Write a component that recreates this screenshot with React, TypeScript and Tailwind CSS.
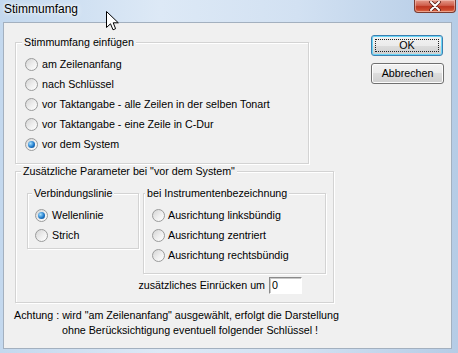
import type { ReactNode } from "react";

function Radio({ label, checked = false, gap = "gap-[4px]" }: { label: string; checked?: boolean; gap?: string }) {
  return (
    <div className={`flex h-5 items-center ${gap}`}>
      <span className="flex h-[13px] w-[13px] shrink-0 items-center justify-center rounded-full border border-[#9a9b9b] bg-[linear-gradient(135deg,#d4d4d4,#efefef_55%,#ffffff)]">
        {checked && (
          <span className="h-[7px] w-[7px] rounded-full bg-[radial-gradient(circle_at_35%_35%,#a8e2ff,#1f7acb_55%,#0a3d78)]" />
        )}
      </span>
      <span className="whitespace-nowrap">{label}</span>
    </div>
  );
}

function GroupBox({
  title,
  titleLeft,
  className,
  children,
}: {
  title: string;
  titleLeft: string;
  className: string;
  children: ReactNode;
}) {
  return (
    <div className={`relative border border-[#d3d3d3] shadow-[inset_1px_1px_0_#ffffff,1px_1px_0_#ffffff] ${className}`}>
      <span className={`absolute -top-[7px] ${titleLeft} whitespace-nowrap bg-[#f0f0f0] px-[2px] leading-[13px]`}>
        {title}
      </span>
      {children}
    </div>
  );
}

function Cursor() {
  return (
    <svg className="absolute left-[106px] top-[11px]" width="13" height="20" viewBox="0 0 13 20">
      <path
        d="M0.5 0.5 L0.5 16.5 L4.5 12.8 L7 18.8 L9.6 17.7 L7.2 11.8 L12.3 11.8 Z"
        fill="#ffffff"
        stroke="#000000"
        strokeWidth="1"
        strokeLinejoin="round"
      />
    </svg>
  );
}

export default function App() {
  return (
    <div className="relative h-[353px] w-[458px] overflow-hidden bg-[linear-gradient(90deg,#c3d8ee,#dde9f6_35%,#d2e1f2_65%,#b5cce6)] font-['Liberation_Sans',Arial,sans-serif] text-[10.7px] text-black">
      {/* Title bar */}
      <div className="flex h-[22px] items-start justify-between">
        <span className="pl-[4px] pt-[2px] text-[12px] leading-[14px] text-black [text-shadow:0_0_6px_#ffffff,0_0_3px_#ffffff]">
          Stimmumfang
        </span>
        <div className="mr-[2px] flex h-[13px] w-[42px] items-center justify-center rounded-b-[4px] border border-t-0 border-[#7a3a30] bg-[linear-gradient(180deg,#e39a8a,#d0604c_45%,#bd3620_55%,#cf4e30_85%,#e68560)] shadow-[inset_0_0_0_1px_rgba(255,220,210,0.45)]">
          <svg width="12" height="10" viewBox="0 0 12 10">
            <path d="M2 1 L10 9 M10 1 L2 9" stroke="#5a2018" strokeWidth="3.6" strokeLinecap="round" />
            <path d="M2 1 L10 9 M10 1 L2 9" stroke="#ffffff" strokeWidth="2" strokeLinecap="round" />
          </svg>
        </div>
      </div>

      {/* Client area */}
      <div className="ml-[3px] flex h-[327px] w-[449px] flex-col border border-[#a3b0bf] bg-[#f0f0f0] pl-[11px] pt-[12px]">
        <div className="flex items-start">
          {/* Left column */}
          <div className="mt-[7px] flex w-[319px] flex-col">
            <GroupBox title="Stimmumfang einfügen" titleLeft="left-[6px]" className="h-[122px] w-[294px] pl-[9px] pt-[11px]">
              <Radio label="am Zeilenanfang" />
              <Radio label="nach Schlüssel" />
              <Radio label="vor Taktangabe - alle Zeilen in der selben Tonart" />
              <Radio label="vor Taktangabe - eine Zeile in C-Dur" />
              <Radio label="vor dem System" checked />
            </GroupBox>

            <GroupBox
              title={'Zusätzliche Parameter bei "vor dem System"'}
              titleLeft="left-[5px]"
              className="mt-[7px] h-[132px] w-[319px] pl-[11px] pt-[21px]"
            >
              <div className="flex items-start gap-[4px]">
                <GroupBox title="Verbindungslinie" titleLeft="left-[4px]" className="h-[56px] w-[112px] pl-[7px] pt-[11px]">
                  <Radio label="Wellenlinie" checked />
                  <Radio label="Strich" />
                </GroupBox>
                <GroupBox
                  title="bei Instrumentenbezeichnung"
                  titleLeft="left-[1px]"
                  className="h-[81px] w-[183px] pl-[8px] pt-[11px]"
                >
                  <Radio label="Ausrichtung linksbündig" gap="gap-[3px]" />
                  <Radio label="Ausrichtung zentriert" gap="gap-[3px]" />
                  <Radio label="Ausrichtung rechtsbündig" gap="gap-[3px]" />
                </GroupBox>
              </div>
              <div className="mt-[3px] flex items-center justify-end gap-[4px] pr-[31px]">
                <span className="whitespace-nowrap">zusätzliches Einrücken um</span>
                <div className="flex h-[17px] w-[33px] items-center border border-b-white border-l-[#8a8a8a] border-r-white border-t-[#8a8a8a] bg-white pl-[2px] shadow-[inset_1px_1px_0_#c8c8c8]">
                  0
                </div>
              </div>
            </GroupBox>
          </div>

          {/* Buttons */}
          <div className="ml-[37px] flex flex-col gap-[7px]">
            <button className="relative flex h-[21px] w-[72px] items-center justify-center rounded-[3px] border border-[#3c7fb1] bg-[linear-gradient(180deg,#f2f2f2,#ebebeb_50%,#dddddd_50%,#cfcfcf)] shadow-[inset_0_0_0_1px_#6ad6f7]">
              <span className="absolute inset-[3px] border border-dotted border-[#202020]" />
              <span className="relative">OK</span>
            </button>
            <button className="flex h-[21px] w-[73px] items-center justify-center rounded-[3px] border border-[#707070] bg-[linear-gradient(180deg,#f2f2f2,#ebebeb_50%,#dddddd_50%,#cfcfcf)] shadow-[inset_0_0_0_1px_#fcfcfc]">
              Abbrechen
            </button>
          </div>
        </div>

        {/* Note */}
        <div className="-ml-px mt-[5px] leading-[15px]">
          <div className="whitespace-nowrap">Achtung : wird "am Zeilenanfang" ausgewählt, erfolgt die Darstellung</div>
          <div className="whitespace-nowrap pl-[48px]">ohne Berücksichtigung eventuell folgender Schlüssel !</div>
        </div>
      </div>

      <Cursor />
    </div>
  );
}
